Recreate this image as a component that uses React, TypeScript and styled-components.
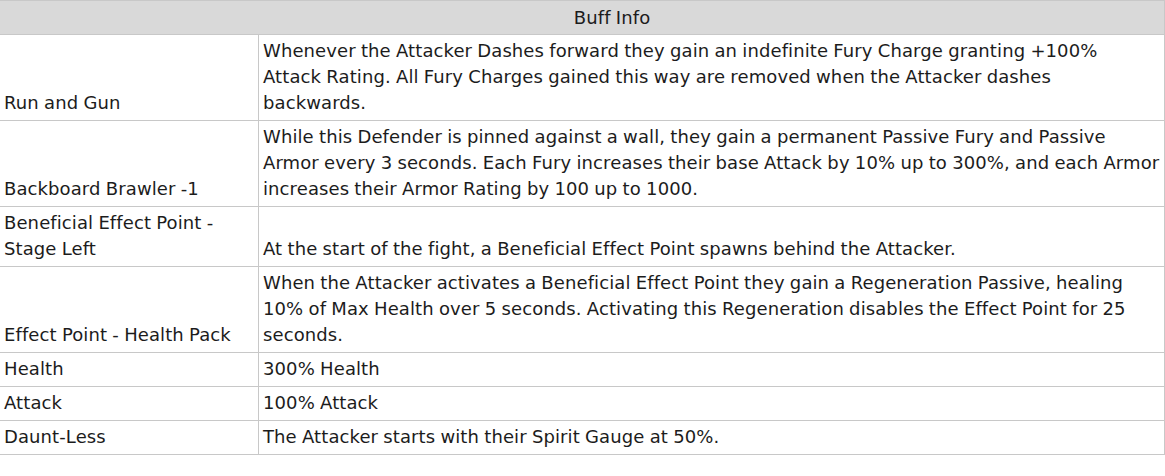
import React from 'react';
import styled, { createGlobalStyle } from 'styled-components';

const GlobalStyle = createGlobalStyle`
	html, body {
		margin: 0;
		padding: 0;
		background: #ffffff;
	}
`;

const Table = styled.table`
	width: 1165px;
	border-collapse: collapse;
	font-family: 'DejaVu Sans', 'Liberation Sans', sans-serif;
	font-size: 18px;
	letter-spacing: 0.1px;
	word-spacing: -0.6px;
	line-height: 26px;
	color: #1c1c1c;
`;

const HeadCell = styled.th`
	background: #d9d9d9;
	font-weight: 400;
	text-align: center;
	height: 33px;
	padding: 0 4px 0 64px;
	border: 1px solid #c8c8c8;
	border-left: none;
`;

const Cell = styled.td<{ $name?: boolean }>`
	vertical-align: bottom;
	text-align: left;
	padding: 3px 4px 4px 4px;
	border: 1px solid #c8c8c8;
	${(p) => (p.$name ? 'border-left: none; width: 250px;' : 'white-space: nowrap;')}
`;

interface Buff {
	name: string;
	info: string[];
}

const buffs: Buff[] = [
	{
		name: 'Run and Gun',
		info: [
			'Whenever the Attacker Dashes forward they gain an indefinite Fury Charge granting +100%',
			'Attack Rating. All Fury Charges gained this way are removed when the Attacker dashes',
			'backwards.',
		],
	},
	{
		name: 'Backboard Brawler -1',
		info: [
			'While this Defender is pinned against a wall, they gain a permanent Passive Fury and Passive',
			'Armor every 3 seconds. Each Fury increases their base Attack by 10% up to 300%, and each Armor',
			'increases their Armor Rating by 100 up to 1000.',
		],
	},
	{
		name: 'Beneficial Effect Point - Stage Left',
		info: ['At the start of the fight, a Beneficial Effect Point spawns behind the Attacker.'],
	},
	{
		name: 'Effect Point - Health Pack',
		info: [
			'When the Attacker activates a Beneficial Effect Point they gain a Regeneration Passive, healing',
			'10% of Max Health over 5 seconds. Activating this Regeneration disables the Effect Point for 25',
			'seconds.',
		],
	},
	{ name: 'Health', info: ['300% Health'] },
	{ name: 'Attack', info: ['100% Attack'] },
	{ name: 'Daunt-Less', info: ['The Attacker starts with their Spirit Gauge at 50%.'] },
];

const App = () => {
	return (
		<>
			<GlobalStyle />
			<Table>
				<thead>
					<tr>
						<HeadCell colSpan={2}>Buff Info</HeadCell>
					</tr>
				</thead>
				<tbody>
					{buffs.map((b) => (
						<tr key={b.name}>
							<Cell $name>{b.name}</Cell>
							<Cell>
								{b.info.map((line, i) => (
									<React.Fragment key={i}>
										{i > 0 && <br />}
										{line}
									</React.Fragment>
								))}
							</Cell>
						</tr>
					))}
				</tbody>
			</Table>
		</>
	);
};

export default App;
